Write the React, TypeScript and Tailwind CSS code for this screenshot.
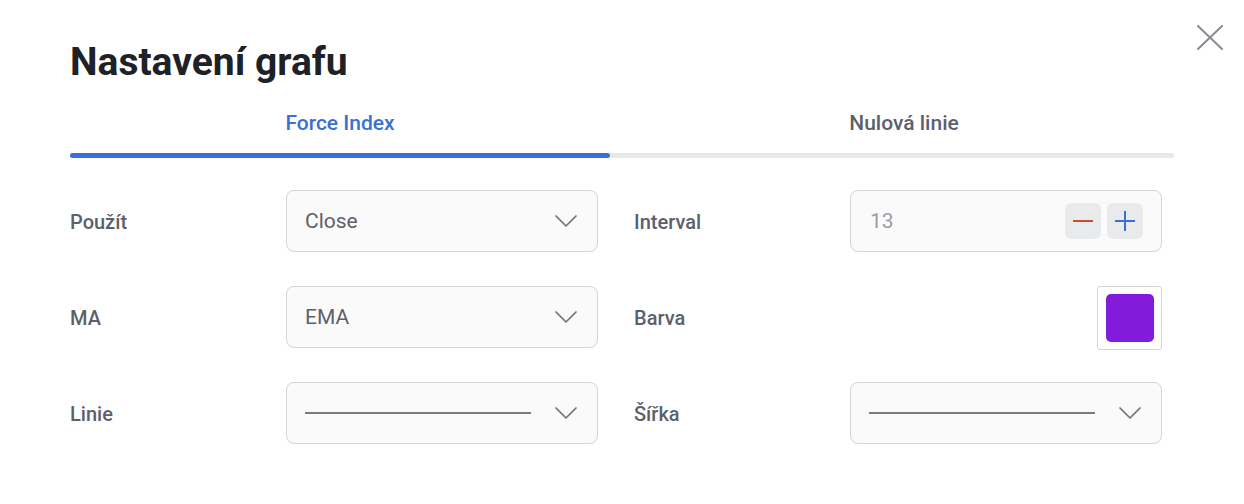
function Chevron() {
  return (
    <svg width="24" height="14" viewBox="0 0 24 14" fill="none" className="shrink-0">
      <path d="M2 2l10 10L22 2" stroke="#6f737c" strokeWidth="1.7" strokeLinecap="round" strokeLinejoin="round" />
    </svg>
  )
}

const boxClass =
  'h-[62px] w-[312px] flex items-center rounded-lg border border-[#d3d4d7] bg-[#fafafa] pl-[18px] pr-[19px]'

function Select({ value }: { value: string }) {
  return (
    <div className={boxClass}>
      <span className="flex-1 pt-[2px] text-[21px] text-[#5c606b]">{value}</span>
      <Chevron />
    </div>
  )
}

function LineSelect() {
  return (
    <div className={boxClass}>
      <div className="flex-1 flex items-center">
        <div className="w-[226px] h-[2px] bg-[#7a7a7a]" />
      </div>
      <Chevron />
    </div>
  )
}

function Label({ children }: { children: React.ReactNode }) {
  return <span className="w-[216px] shrink-0 pt-[2px] text-[20px] font-medium text-[#5c606b]">{children}</span>
}

export default function App() {
  return (
    <div
      className="relative w-[1244px] h-[504px] bg-white px-[70px]"
      style={{ fontFamily: 'Roboto, "Noto Sans", sans-serif' }}
    >
      {/* Close */}
      <button className="absolute left-[1197px] top-[25px]">
        <svg width="26" height="25" viewBox="0 0 26 25">
          <path d="M1 1l24 23M25 1L1 24" stroke="#878b93" strokeWidth="2" strokeLinecap="round" />
        </svg>
      </button>

      <h1 className="pt-[38px] text-[39px] leading-[48px] font-bold text-[#1e2126]">Nastavení grafu</h1>

      {/* Tabs */}
      <div className="mt-[23px] flex w-[1104px]">
        <div className="w-[540px] flex flex-col">
          <span className="text-center text-[21px] font-medium leading-[28px] text-[#3b6fd4]">Force Index</span>
          <div className="mt-[16px] h-[5px] bg-[#3b6fd4] rounded-full" />
        </div>
        <div className="flex-1 flex flex-col">
          <span className="text-center pl-[24px] text-[21px] font-medium leading-[28px] text-[#5c606b]">
            Nulová linie
          </span>
          <div className="mt-[16px] h-[5px] bg-[#e9e9eb] rounded-r-full" />
        </div>
      </div>

      {/* Form */}
      <div className="mt-[32px] grid grid-cols-[528px_528px] auto-rows-[62px] gap-x-[36px] gap-y-[34px]">
        <div className="flex items-center">
          <Label>Použít</Label>
          <Select value="Close" />
        </div>
        <div className="flex items-center">
          <Label>Interval</Label>
          <div className="h-[62px] w-[312px] flex items-center rounded-lg border border-[#d3d4d7] bg-[#fafafa] pl-[19px] pr-[18px]">
            <span className="flex-1 pt-[2px] text-[21px] text-[#9a9da5]">13</span>
            <div className="flex gap-[6px]">
              <button className="w-[36px] h-[36px] rounded-md bg-[#e9eaec] flex items-center justify-center">
                <div className="w-[20px] h-[2px] bg-[#d14a2b]" />
              </button>
              <button className="w-[36px] h-[36px] rounded-md bg-[#e9eaec] flex items-center justify-center">
                <svg width="20" height="20" viewBox="0 0 20 20">
                  <path d="M10 0v20M0 10h20" stroke="#3b6fd4" strokeWidth="2" />
                </svg>
              </button>
            </div>
          </div>
        </div>

        <div className="flex items-center">
          <Label>MA</Label>
          <Select value="EMA" />
        </div>
        <div className="flex items-center">
          <Label>Barva</Label>
          <div className="flex-1 flex justify-end self-start">
            <div className="w-[65px] h-[64px] rounded-[3px] border border-[#d3d4d7] bg-white flex items-center justify-center">
              <div className="w-[48px] h-[48px] rounded-[5px] bg-[#821cda]" />
            </div>
          </div>
        </div>

        <div className="flex items-center">
          <Label>Linie</Label>
          <LineSelect />
        </div>
        <div className="flex items-center">
          <Label>Šířka</Label>
          <LineSelect />
        </div>
      </div>
    </div>
  )
}
